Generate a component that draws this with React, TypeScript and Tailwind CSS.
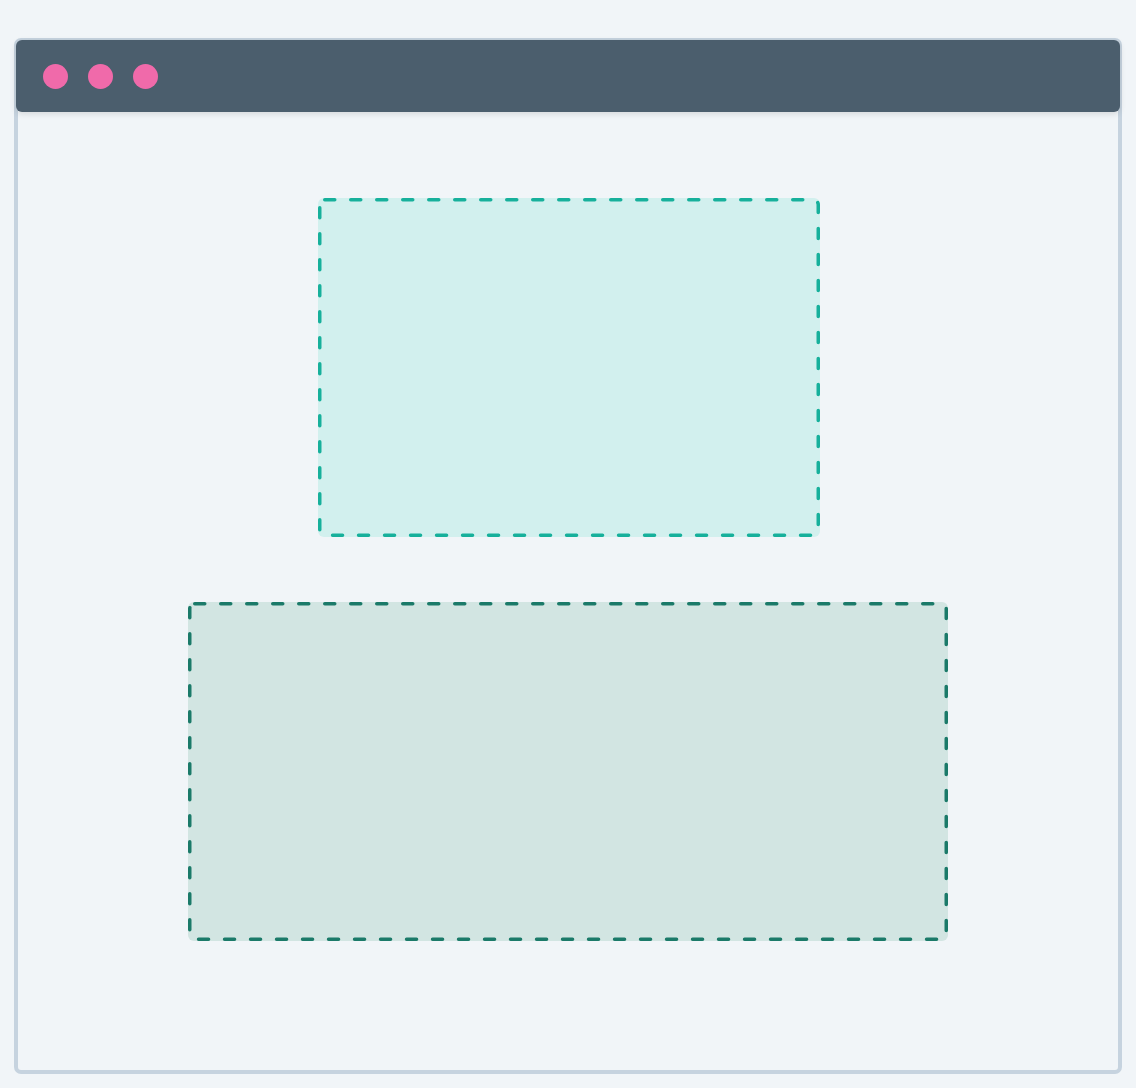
import React from 'react';

const DashedBox: React.FC<{ w: number; h: number; stroke: string; className: string }> = ({ w, h, stroke, className }) => (
  <div className={`relative rounded-[6px] ${className}`}>
    <svg className="absolute inset-0" width={w} height={h} viewBox={`0 0 ${w} ${h}`} fill="none">
      <rect
        x={1.75}
        y={1.75}
        width={w - 3.5}
        height={h - 3.5}
        rx={5}
        stroke={stroke}
        strokeWidth={3.5}
        strokeDasharray="10 16"
        strokeLinecap="round"
      />
    </svg>
  </div>
);

export default function App() {
  return (
    <div className="min-h-[1088px] w-[1136px] bg-[#f1f5f8] pt-[38px] pl-[14px]">
      <div className="flex h-[1036px] w-[1108px] flex-col rounded-[7px] border-[4px] border-[#c6d3df] bg-[#f1f5f8]">
        <div className="-mx-[2px] -mt-[2px] flex h-[72px] items-center gap-[20px] rounded-[6px] bg-[#4b5e6d] pl-[27px] shadow-[0_2px_6px_rgba(0,0,0,0.12)]">
          <div className="h-[25px] w-[25px] rounded-full bg-[#f06aaa]" />
          <div className="h-[25px] w-[25px] rounded-full bg-[#f06aaa]" />
          <div className="h-[25px] w-[25px] rounded-full bg-[#f06aaa]" />
        </div>
        <div className="flex flex-col items-center pt-[86px]">
          <div className="pl-[2px]">
            <DashedBox w={502} h={339} stroke="#17b09b" className="h-[339px] w-[502px] bg-[#d2f0ee]" />
          </div>
          <div className="mt-[65px]">
            <DashedBox w={760} h={339} stroke="#1b7a69" className="h-[339px] w-[760px] bg-[#d2e5e2]" />
          </div>
        </div>
      </div>
    </div>
  );
}
